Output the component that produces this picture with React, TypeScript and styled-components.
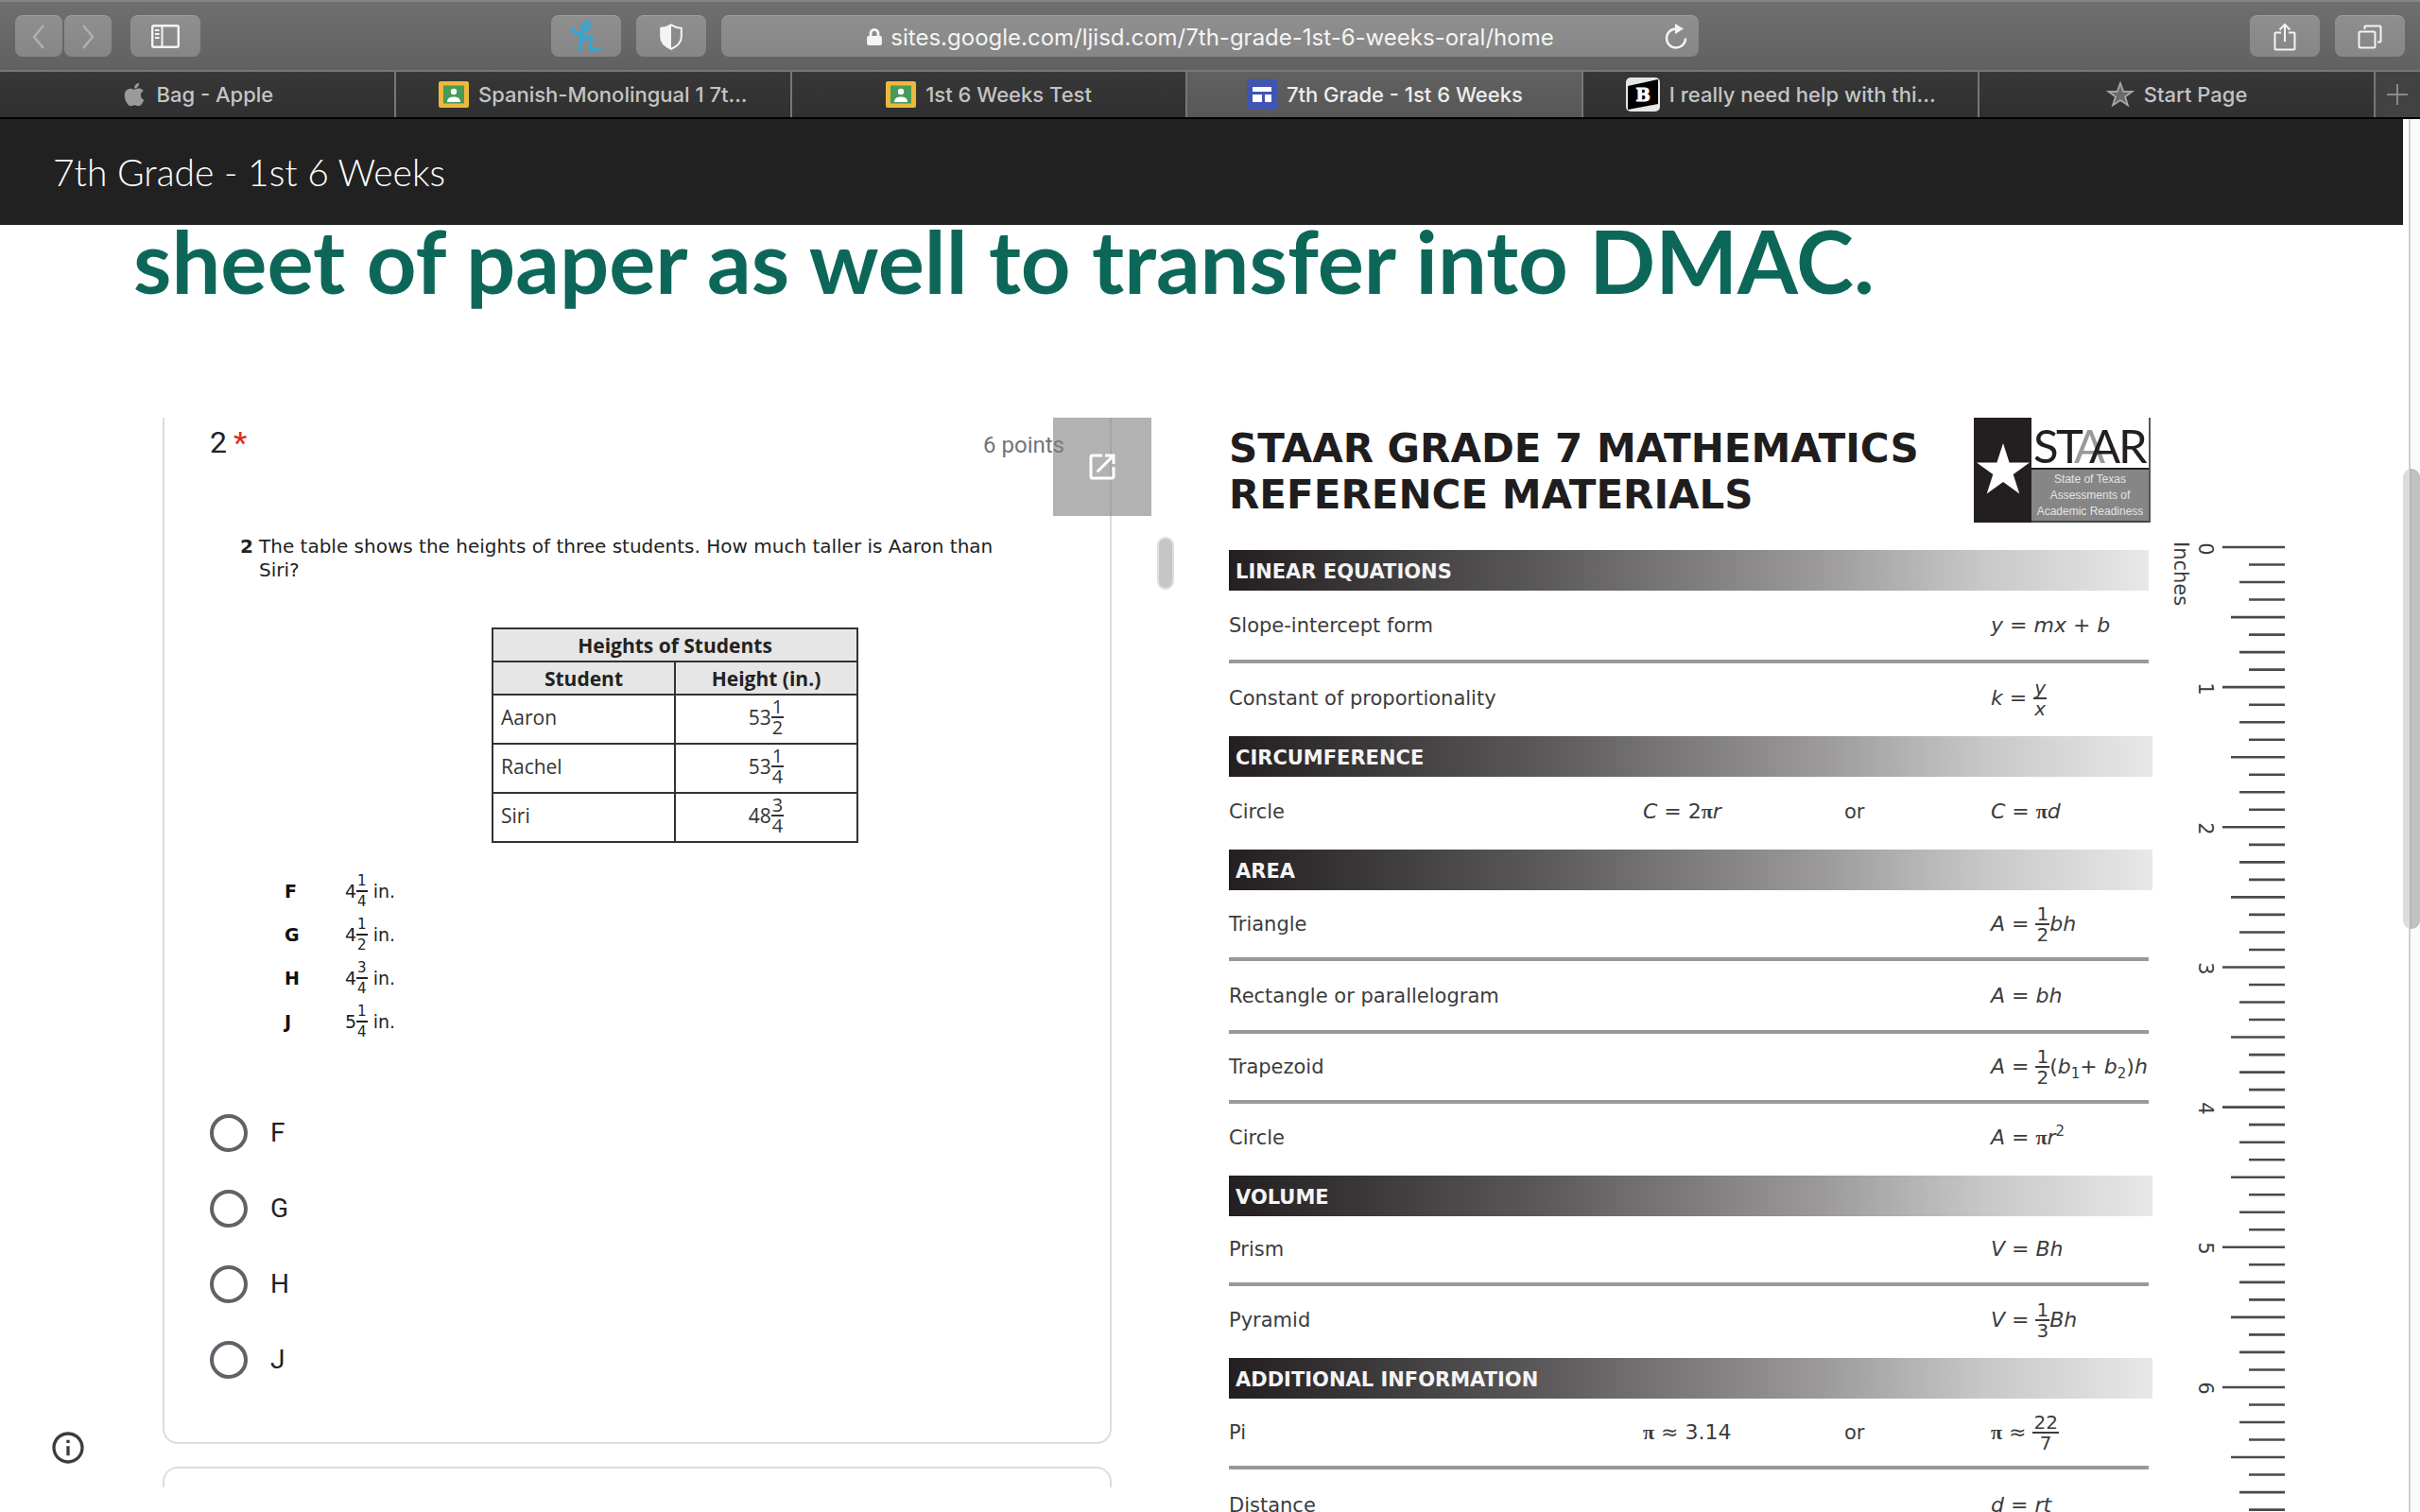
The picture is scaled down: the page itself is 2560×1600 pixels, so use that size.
import React from "react";
import styled, { createGlobalStyle, css } from "styled-components";
import { FaApple, FaLock } from "react-icons/fa";
import { MdInfoOutline, MdOpenInNew } from "react-icons/md";

const sans = `Inter, "Liberation Sans", sans-serif`;
const roboto = `Roboto, "Liberation Sans", sans-serif`;
const lato = `Lato, "Liberation Sans", sans-serif`;
const verdana = `"DejaVu Sans", sans-serif`;
const humanist = `"Open Sans", "Noto Sans", sans-serif`;

const GlobalStyle = createGlobalStyle`
  *, *::before, *::after { box-sizing: border-box; }
  body { margin: 0; background: #fff; }
  button { font: inherit; color: inherit; border: 0; padding: 0; background: none; cursor: pointer; }
  h1, h2, p { margin: 0; font-weight: inherit; }
  svg { display: block; flex: none; }
`;

const Window = styled.div`
  display: flex;
  flex-direction: column;
  height: 100vh;
  overflow: hidden;
  background: #fff;
`;

/* ---------- browser toolbar ---------- */

const Toolbar = styled.header`
  flex: none;
  display: grid;
  grid-template-columns: minmax(0, 1fr) minmax(0, 1034px) minmax(0, 1fr);
  gap: 16px;
  align-items: center;
  height: 76px;
  padding: 0 16px;
  border-top: 2px solid #858585;
  border-bottom: 2px solid #777;
  background: linear-gradient(#6f6f6f, #616161);
  font-family: ${sans};
`;

const ToolGroup = styled.div<{ $align?: string; $gap?: number }>`
  display: flex;
  justify-content: ${(p) => p.$align ?? "flex-start"};
  gap: ${(p) => p.$gap ?? 16}px;
`;

const surface = css`
  height: 44px;
  border-radius: 8px;
  border-top: 1px solid #a0a0a0;
  background: linear-gradient(#8f8f8f, #868686);
`;

const ToolButton = styled.button<{ $narrow?: boolean }>`
  ${surface}
  display: flex;
  align-items: center;
  justify-content: center;
  width: ${(p) => (p.$narrow ? 50 : 74)}px;
  color: ${(p) => (p.$narrow ? "#b0b0b0" : "#f4f4f4")};
`;

const AddressBar = styled.div`
  ${surface}
  display: grid;
  grid-template-columns: 1fr auto 1fr;
  align-items: center;
  padding: 0 12px;
  color: #f4f4f4;
`;

const AddressLabel = styled.label`
  grid-column: 2;
  display: flex;
  align-items: center;
  gap: 8px;
`;

const AddressInput = styled.input`
  field-sizing: content;
  padding: 2px 0 0;
  border: 0;
  outline: 0;
  background: transparent;
  color: #f4f4f4;
  font: 400 24px/32px ${sans};
`;

const ReloadButton = styled.button`
  justify-self: end;
`;

const TabBar = styled.nav`
  flex: none;
  display: flex;
  height: 50px;
  border-bottom: 2px solid #000;
  background: linear-gradient(#373737, #303030);
  font-family: ${sans};
`;

const Tab = styled.button<{ $active?: boolean }>`
  flex: 1 1 0;
  min-width: 0;
  display: flex;
  align-items: center;
  justify-content: center;
  gap: 10px;
  background: ${(p) => (p.$active ? "linear-gradient(#616161, #575757)" : "none")};
  color: ${(p) => (p.$active ? "#eee" : "#c4c4c4")};
  font-size: 22px;
  line-height: 28px;
  font-weight: 500;
  white-space: nowrap;

  & + & { border-left: 2px solid #777; }
`;

const NewTab = styled.button`
  flex: none;
  display: flex;
  align-items: center;
  justify-content: center;
  width: 49px;
  border-left: 2px solid #777;
  background: #424242;
  color: #8a8a8a;
`;

/* ---------- page ---------- */

const Viewport = styled.div`
  flex: 1;
  min-height: 0;
  display: flex;
`;

const Page = styled.main`
  position: relative;
  flex: 1;
  min-width: 0;
  overflow: hidden;
`;

const SiteHeader = styled.div`
  display: flex;
  align-items: center;
  height: 112px;
  padding: 0 56px;
  background: #212121;
  color: #fff;
  font: 300 39px/48px ${lato};
`;

const Headline = styled.h1`
  padding-left: 141px;
  color: #0d6759;
  font: 700 92px/76px ${lato};
  white-space: nowrap;
`;

const Columns = styled.div`
  display: grid;
  grid-template-columns: minmax(0, 1070fr) minmax(0, 1117fr);
  gap: 58px;
  padding: 128px 125px 0 172px;
`;

const ScrollTrack = styled.div`
  flex: none;
  display: flex;
  flex-direction: column;
  width: 18px;
  padding-top: 370px;
  background: linear-gradient(90deg, #fff 6px, #cfcfcf 6px, #cfcfcf 8px, #fafafa 8px);
`;

const ScrollThumb = styled.div`
  height: 487px;
  border-radius: 9px;
  background: linear-gradient(90deg, #dcdcdc 7px, #b4b4b4 7px, #b4b4b4 9px, #c1c1c1 9px);
`;

const InfoButton = styled.button`
  position: absolute;
  left: 52px;
  bottom: 48px;
  color: #3c3c3c;
`;

/* ---------- embedded form ---------- */

const FormPanel = styled.section`
  display: flex;
  align-items: flex-start;
  gap: 6px;
`;

const FormFrame = styled.div`
  position: relative;
  flex: 1;
  min-width: 0;
  height: 1132px;
  padding-right: 42px;
  overflow: hidden;
`;

const InnerThumb = styled.div`
  width: 18px;
  height: 56px;
  margin-top: 126px;
  border: 2px solid #dedede;
  border-radius: 9px;
  background: #c6c6c6;
`;

const Card = styled.div<{ $part: "end" | "start" }>`
  border: 2px solid #dadce0;
  ${(p) =>
    p.$part === "end"
      ? css`
          border-top: 0;
          border-radius: 0 0 16px 16px;
          padding: 6px 48px 67px;
          margin-bottom: 24px;
        `
      : css`
          border-radius: 16px 16px 0 0;
          height: 120px;
        `}
`;

const PopOut = styled.button`
  position: absolute;
  top: 0;
  right: 0;
  display: flex;
  align-items: center;
  justify-content: center;
  width: 104px;
  height: 104px;
  background: rgba(127, 127, 127, 0.6);
  color: #fff;
`;

const QuestionHead = styled.div`
  display: flex;
  align-items: baseline;
  justify-content: space-between;
  color: #202124;
  font: 400 32px/40px ${roboto};
`;

const Required = styled.span`
  margin-left: 7px;
  color: #d93025;
  font-weight: 500;
`;

const Points = styled.span`
  color: #70757a;
  font-size: 24px;
`;

const Prompt = styled.p`
  display: grid;
  grid-template-columns: 20px 1fr;
  margin: 75px 0 0 32px;
  color: #222;
  font: 400 20px/25px ${verdana};
  white-space: nowrap;
`;

const Heights = styled.table`
  width: 388px;
  margin: 48px 0 0 298px;
  border-collapse: collapse;
  table-layout: fixed;
  color: #333;
  font: 400 21px/28px ${humanist};

  th, td { padding: 0 8px; border: 2px solid #333; }
  thead tr { height: 35px; }
  tbody tr { height: 52px; }
  th { padding: 0; background: #e6e6e6; font-weight: 700; color: #222; }
  td { padding-bottom: 4px; }
  td:last-child { text-align: center; }
`;

const Choices = styled.dl`
  display: grid;
  grid-template-columns: 64px 1fr;
  grid-auto-rows: 46px;
  align-items: center;
  margin: 28px 0 0 79px;
  color: #222;
  font: 400 19px/24px ${verdana};

  dt { font-weight: 700; color: #111; }
  dd { margin: 0; }
`;

const Options = styled.div`
  display: grid;
  gap: 40px;
  margin-top: 75px;
`;

const Option = styled.label`
  display: flex;
  align-items: center;
  gap: 24px;
  height: 40px;
  color: #202124;
  font: 400 28px/40px ${roboto};
`;

const Radio = styled.input`
  appearance: none;
  width: 40px;
  height: 40px;
  margin: 0;
  border: 4px solid #5f6368;
  border-radius: 50%;
`;

/* ---------- formulas ---------- */

const Formula = styled.span`
  display: inline-flex;
  align-items: center;
  white-space: pre;
`;

const FractionBox = styled.span<{ $size: number }>`
  display: inline-grid;
  text-align: center;
  font-size: ${(p) => p.$size}px;
  line-height: 20px;

  span { padding: 0 1px; }
  span:first-child { border-bottom: 2px solid currentColor; }
`;

const Pi = styled.span`
  font-family: "Liberation Serif", serif;
  font-weight: 700;
`;

const Script = styled.span<{ $sup?: boolean }>`
  font-size: 15px;
  line-height: 16px;
  ${(p) => (p.$sup ? "padding-bottom: 14px;" : "padding-top: 14px;")}
`;

function Fraction({ top, bottom, size = 20 }: { top: React.ReactNode; bottom: React.ReactNode; size?: number }) {
  return (
    <FractionBox $size={size}>
      <span>{top}</span>
      <span>{bottom}</span>
    </FractionBox>
  );
}

/* ---------- reference sheet ---------- */

const Reference = styled.section`
  display: flex;
  align-items: flex-start;
`;

const Sheet = styled.div`
  flex: 1;
  min-width: 0;
`;

const SheetHead = styled.div`
  display: flex;
  justify-content: space-between;
  height: 140px;
  padding-right: 2px;
`;

const SheetTitle = styled.h2`
  padding-top: 8px;
  color: #1f1d1e;
  font: 700 42px/49px ${verdana};
  white-space: nowrap;
`;

const Logo = styled.div`
  display: grid;
  grid-template-columns: 61px minmax(0, 1fr);
  grid-template-rows: 55px 56px;
  width: 187px;
  height: 111px;
  border-right: 2px solid #555;
  background: #231f20;
`;

const LogoStar = styled.div`
  grid-row: span 2;
  display: flex;
  justify-content: center;
  padding-top: 27px;
`;

const LogoName = styled.div`
  border-bottom: 2px solid #231f20;
  background: #fff;
`;

const LogoTagline = styled.p`
  padding-top: 2px;
  border-bottom: 2px solid #444;
  background: #868686;
  color: #e4e4e4;
  font: 400 12px/17px "Liberation Sans", sans-serif;
  text-align: center;
  white-space: nowrap;
`;

const FormulaTable = styled.table`
  width: 100%;
  border-collapse: separate;
  border-spacing: 0;
  table-layout: fixed;
  color: #3c3c3c;
  font: 400 21px/24px ${verdana};

  td { padding: 0; white-space: nowrap; }
  ${Formula} { font-size: 22px; }
`;

const Band = styled.th`
  height: 43px;
  padding: 2px 7px 0;
  background: linear-gradient(90deg, #231f20, #595758 33%, #9b999a 64%, #c9c8c8 82%, #e8e8e8);
  color: #f4f4f4;
  font-weight: 700;
  text-align: left;
`;

const Row = styled.tr<{ $height: number; $last?: boolean }>`
  height: ${(p) => p.$height}px;

  td {
    ${(p) => (p.$last ? "padding-bottom: 4px;" : "border-bottom: 4px solid #999;")}
  }
`;

type Entry = { name: string; height: number; alt?: React.ReactNode; formula: React.ReactNode };

const half = <Fraction top="1" bottom="2" />;

const sections: { title: string; rows: Entry[] }[] = [
  {
    title: "LINEAR EQUATIONS",
    rows: [
      { name: "Slope-intercept form", height: 77, formula: <Formula><i>y</i> = <i>mx</i> + <i>b</i></Formula> },
      {
        name: "Constant of proportionality",
        height: 77,
        formula: <Formula><i>k</i> = <Fraction top={<i>y</i>} bottom={<i>x</i>} /></Formula>,
      },
    ],
  },
  {
    title: "CIRCUMFERENCE",
    rows: [
      {
        name: "Circle",
        height: 77,
        alt: <Formula><i>C</i> = 2<Pi>π</Pi><i>r</i></Formula>,
        formula: <Formula><i>C</i> = <Pi>π</Pi><i>d</i></Formula>,
      },
    ],
  },
  {
    title: "AREA",
    rows: [
      { name: "Triangle", height: 75, formula: <Formula><i>A</i> = {half}<i>bh</i></Formula> },
      { name: "Rectangle or parallelogram", height: 77, formula: <Formula><i>A</i> = <i>bh</i></Formula> },
      {
        name: "Trapezoid",
        height: 74,
        formula: (
          <Formula>
            <i>A</i> = {half}(<i>b</i><Script>1</Script>+ <i>b</i><Script>2</Script>)<i>h</i>
          </Formula>
        ),
      },
      { name: "Circle", height: 76, formula: <Formula><i>A</i> = <Pi>π</Pi><i>r</i><Script $sup>2</Script></Formula> },
    ],
  },
  {
    title: "VOLUME",
    rows: [
      { name: "Prism", height: 74, formula: <Formula><i>V</i> = <i>Bh</i></Formula> },
      {
        name: "Pyramid",
        height: 76,
        formula: <Formula><i>V</i> = <Fraction top="1" bottom="3" /><i>Bh</i></Formula>,
      },
    ],
  },
  {
    title: "ADDITIONAL INFORMATION",
    rows: [
      {
        name: "Pi",
        height: 75,
        alt: <Formula><Pi>π</Pi> ≈ 3.14</Formula>,
        formula: <Formula><Pi>π</Pi> ≈ <Fraction top="22" bottom="7" /></Formula>,
      },
      { name: "Distance", height: 80, formula: <Formula><i>d</i> = <i>rt</i></Formula> },
    ],
  },
];

function Ruler() {
  const zero = 137;
  const ticks = Array.from({ length: 56 }, (_, i) => i);
  const start = (i: number) => (i % 8 === 0 ? 74 : i % 4 === 0 ? 83 : i % 2 === 0 ? 92 : 102);
  return (
    <svg width="140" height="1158" viewBox="0 0 140 1158" fontFamily="DejaVu Sans" fontSize="21" fill="#3c3c3c">
      <text transform="translate(23 131) rotate(90)">Inches</text>
      {[0, 1, 2, 3, 4, 5, 6].map((n) => (
        <text key={n} transform={`translate(49 ${zero + 2 + n * 148}) rotate(90)`} textAnchor="middle">
          {n}
        </text>
      ))}
      {ticks.map((i) => (
        <path key={i} d={`M${start(i)} ${zero + i * 18.52}H140`} stroke="#4a4a4a" strokeWidth="2.6" />
      ))}
    </svg>
  );
}

/* ---------- icons ---------- */

const line = { fill: "none", stroke: "currentColor", strokeWidth: 2.4 } as const;

const Chevron = ({ d }: { d: string }) => (
  <svg width="16" height="26" viewBox="0 0 16 26" {...line}><path d={d} /></svg>
);

const SidebarIcon = () => (
  <svg width="30" height="25" viewBox="0 0 30 25" {...line}>
    <rect x="1.2" y="1.2" width="27.6" height="22.6" rx="1.5" />
    <path d="M11.5 1v23M4 6h4.5M4 10h4.5M4 14h4.5" strokeWidth="2" />
  </svg>
);

const HoneyIcon = () => (
  <svg width="32" height="36" viewBox="0 0 32 36" fill="none" stroke="#2ba9de" strokeWidth="3.2" strokeLinecap="round" strokeLinejoin="round">
    <path d="M2 9.500c.5 4 3.500 5.500 8 4C15 12 20 8.500 19.500 5 19 1 13 1 12.300 9L9.300 32.500" />
    <path d="M10 25C12 19.500 17 16.500 20 17.500c3.500 1.500.5 6 .5 10 0 6 4 5.500 9 3" />
  </svg>
);

const ShieldIcon = () => (
  <svg width="24" height="28" viewBox="0 0 24 28">
    <path d="M12 1.300c3 2 6.500 3 10.800 3.400V14c0 6-4.500 10-10.800 12.800C5.700 24 1.200 20 1.200 14V4.700C5.500 4.300 9 3.300 12 1.300z" {...line} strokeWidth="2" />
    <path d="M12 1.300v25.500C5.700 24 1.200 20 1.200 14V4.700C5.500 4.300 9 3.300 12 1.300z" fill="currentColor" />
  </svg>
);

const ReloadIcon = () => (
  <svg width="24" height="28" viewBox="0 0 24 28" {...line}>
    <path d="M12 5.500a10 10 0 1 0 10 10" />
    <path d="M11 0l9 5.500-9 5.500z" fill="currentColor" stroke="none" />
  </svg>
);

const ShareIcon = () => (
  <svg width="24" height="30" viewBox="0 0 24 30" {...line} strokeWidth="2">
    <path d="M8 10.500H2.500a1 1 0 0 0-1 1v16a1 1 0 0 0 1 1h19a1 1 0 0 0 1-1v-16a1 1 0 0 0-1-1H16M12 20V2M6.500 7.500L12 2l5.500 5.500" />
  </svg>
);

const OverviewIcon = () => (
  <svg width="26" height="26" viewBox="0 0 26 26" {...line} strokeWidth="2">
    <rect x="1.500" y="7.500" width="17" height="17" rx="1.500" />
    <path d="M7.500 5V2.500a1 1 0 0 1 1-1h15a1 1 0 0 1 1 1v15a1 1 0 0 1-1 1H21" />
  </svg>
);

const ClassroomIcon = () => (
  <svg width="32" height="28" viewBox="0 0 32 28">
    <rect width="32" height="28" rx="2" fill="#edb83b" />
    <rect x="5" y="4.500" width="22" height="19" fill="#479a58" />
    <circle cx="16" cy="11" r="3.200" fill="#fff" />
    <path d="M9 22c0-4.500 3.500-5.500 7-5.500s7 1 7 5.500z" fill="#fff" />
  </svg>
);

const SitesIcon = () => (
  <svg width="32" height="32" viewBox="0 0 32 32">
    <rect width="32" height="32" rx="2" fill="#4054b2" />
    <path d="M6 8h20v5H6zM6 16h10v8H6zM19 16h7v8h-7z" fill="#fff" />
  </svg>
);

const BrainlyIcon = () => (
  <svg width="36" height="36" viewBox="0 0 36 36">
    <rect width="36" height="36" rx="5" fill="#e6e6e6" />
    <path d="M2 9L34 2v26L2 34z" fill="#000" />
    <text x="18" y="25" textAnchor="middle" fill="#fff" stroke="#fff" fontFamily="DejaVu Serif" fontWeight="700" fontSize="18">
      B
    </text>
  </svg>
);

const StarIcon = () => (
  <svg width="30" height="28" viewBox="0 0 30 28">
    <path d="M15 2l3.200 8.800h9.400l-7.500 5.600 2.800 9L15 20l-7.900 5.400 2.800-9L2.400 10.800h9.400z" fill="#6a6a6a" stroke="#a8a8a8" strokeWidth="1.800" />
  </svg>
);

const PlusIcon = () => (
  <svg width="22" height="22" viewBox="0 0 22 22" {...line} strokeWidth="2"><path d="M11 0v22M0 11h22" /></svg>
);

const tabs = [
  { icon: <FaApple size={28} color="#9a9a9a" />, title: "Bag - Apple" },
  { icon: <ClassroomIcon />, title: "Spanish-Monolingual 1 7t..." },
  { icon: <ClassroomIcon />, title: "1st 6 Weeks Test" },
  { icon: <SitesIcon />, title: "7th Grade - 1st 6 Weeks", active: true },
  { icon: <BrainlyIcon />, title: "I really need help with thi..." },
  { icon: <StarIcon />, title: "Start Page" },
];

const students = [
  { name: "Aaron", whole: "53", top: "1", bottom: "2" },
  { name: "Rachel", whole: "53", top: "1", bottom: "4" },
  { name: "Siri", whole: "48", top: "3", bottom: "4" },
];

const choices = [
  { key: "F", whole: "4", top: "1", bottom: "4" },
  { key: "G", whole: "4", top: "1", bottom: "2" },
  { key: "H", whole: "4", top: "3", bottom: "4" },
  { key: "J", whole: "5", top: "1", bottom: "4" },
];

export default function App() {
  return (
    <Window>
      <GlobalStyle />
      <Toolbar>
        <ToolGroup $align="space-between">
          <ToolGroup $gap={20}>
            <ToolGroup $gap={2}>
              <ToolButton $narrow aria-label="Back"><Chevron d="M13 1L3 13l10 12" /></ToolButton>
              <ToolButton $narrow aria-label="Forward"><Chevron d="M3 1l10 12L3 25" /></ToolButton>
            </ToolGroup>
            <ToolButton aria-label="Sidebar"><SidebarIcon /></ToolButton>
          </ToolGroup>
          <ToolGroup>
            <ToolButton aria-label="Honey"><HoneyIcon /></ToolButton>
            <ToolButton aria-label="Privacy report"><ShieldIcon /></ToolButton>
          </ToolGroup>
        </ToolGroup>
        <AddressBar>
          <AddressLabel>
            <FaLock size={18} />
            <AddressInput aria-label="Address" defaultValue="sites.google.com/ljisd.com/7th-grade-1st-6-weeks-oral/home" />
          </AddressLabel>
          <ReloadButton aria-label="Reload"><ReloadIcon /></ReloadButton>
        </AddressBar>
        <ToolGroup $align="flex-end">
          <ToolButton aria-label="Share"><ShareIcon /></ToolButton>
          <ToolButton aria-label="Tab overview"><OverviewIcon /></ToolButton>
        </ToolGroup>
      </Toolbar>
      <TabBar>
        {tabs.map((t) => (
          <Tab key={t.title} $active={t.active}>
            {t.icon}
            {t.title}
          </Tab>
        ))}
        <NewTab aria-label="New tab"><PlusIcon /></NewTab>
      </TabBar>

      <Viewport>
        <Page>
          <SiteHeader>7th Grade - 1st 6 Weeks</SiteHeader>
          <Headline>sheet of paper as well to transfer into DMAC.</Headline>
          <Columns>
            <FormPanel>
              <FormFrame>
                <Card $part="end">
                  <QuestionHead>
                    <span>2<Required>*</Required></span>
                    <Points>6 points</Points>
                  </QuestionHead>
                  <Prompt>
                    <b>2</b>
                    <span>
                      The table shows the heights of three students. How much taller is Aaron than
                      <br />
                      Siri?
                    </span>
                  </Prompt>
                  <Heights>
                    <thead>
                      <tr><th colSpan={2}>Heights of Students</th></tr>
                      <tr><th>Student</th><th>Height (in.)</th></tr>
                    </thead>
                    <tbody>
                      {students.map((s) => (
                        <tr key={s.name}>
                          <td>{s.name}</td>
                          <td><Formula>{s.whole}<Fraction top={s.top} bottom={s.bottom} /></Formula></td>
                        </tr>
                      ))}
                    </tbody>
                  </Heights>
                  <Choices>
                    {choices.map((c) => (
                      <React.Fragment key={c.key}>
                        <dt>{c.key}</dt>
                        <dd><Formula>{c.whole}<Fraction size={15} top={c.top} bottom={c.bottom} /> in.</Formula></dd>
                      </React.Fragment>
                    ))}
                  </Choices>
                  <Options>
                    {choices.map((c) => (
                      <Option key={c.key}>
                        <Radio type="radio" name="answer" value={c.key} />
                        {c.key}
                      </Option>
                    ))}
                  </Options>
                </Card>
                <Card $part="start" />
                <PopOut aria-label="Open in new window"><MdOpenInNew size={36} /></PopOut>
              </FormFrame>
              <InnerThumb />
            </FormPanel>

            <Reference>
              <Sheet>
                <SheetHead>
                  <SheetTitle>STAAR GRADE 7 MATHEMATICS<br />REFERENCE MATERIALS</SheetTitle>
                  <Logo>
                    <LogoStar>
                      <svg width="56" height="54" viewBox="0 0 56 54">
                        <path d="M28 0l6.600 20.500H56L38.700 33l6.600 20.500L28 41 10.700 53.500 17.300 33 0 20.500h21.400z" fill="#fff" />
                      </svg>
                    </LogoStar>
                    <LogoName>
                      <svg width="124" height="53" viewBox="0 0 124 53" overflow="visible" fontFamily="Lato" fontSize="49" fill="#231f20">
                        <text x="2" y="48">S</text>
                        <text x="26" y="48">T</text>
                        <text x="45" y="48" fill="#9a9a9a">A</text>
                        <text x="61" y="48">A</text>
                        <text x="92" y="48">R</text>
                      </svg>
                    </LogoName>
                    <LogoTagline>State of Texas<br />Assessments of<br />Academic Readiness</LogoTagline>
                  </Logo>
                </SheetHead>
                <FormulaTable>
                  <colgroup>
                    <col style={{ width: 438 }} />
                    <col style={{ width: 213 }} />
                    <col style={{ width: 155 }} />
                    <col />
                    <col style={{ width: 4 }} />
                  </colgroup>
                  {sections.map((s, n) => (
                    <tbody key={s.title}>
                      <tr><Band colSpan={n === 0 ? 4 : 5}>{s.title}</Band></tr>
                      {s.rows.map((r, i) => (
                        <Row key={r.name} $height={r.height} $last={i === s.rows.length - 1}>
                          <td>{r.name}</td>
                          <td>{r.alt}</td>
                          <td>{r.alt ? "or" : null}</td>
                          <td>{r.formula}</td>
                        </Row>
                      ))}
                    </tbody>
                  ))}
                </FormulaTable>
              </Sheet>
              <Ruler />
            </Reference>
          </Columns>
          <InfoButton aria-label="Page details"><MdInfoOutline size={40} /></InfoButton>
        </Page>
        <ScrollTrack><ScrollThumb /></ScrollTrack>
      </Viewport>
    </Window>
  );
}
